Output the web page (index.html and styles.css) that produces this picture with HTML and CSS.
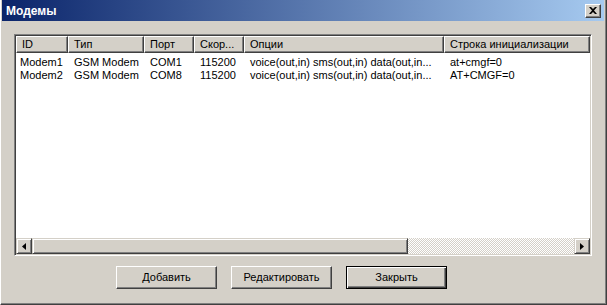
FILE: index.html
```html
<!DOCTYPE html>
<html>
<head>
	<title>Модемы</title>
	<meta charset="utf-8">
	<link rel="stylesheet" href="styles.css">
</head>
<body>
	<div class="window">
		<div class="titlebar">
			<span class="title">Модемы</span>
			<span class="close">
				<svg width="8" height="7" viewBox="0 0 8 7"><path d="M0 0h2l2 2 2-2h2l-3 3.5 3 3.5h-2l-2-2-2 2h-2l3-3.5z" fill="#000"/></svg>
			</span>
		</div>
		<div class="content">
			<div class="listview">
				<div class="header">
					<div class="col c1">ID</div>
					<div class="col c2">Тип</div>
					<div class="col c3">Порт</div>
					<div class="col c4">Скор...</div>
					<div class="col c5">Опции</div>
					<div class="col c6">Строка инициализации</div>
				</div>
				<div class="rows">
					<div class="row">
						<div class="cell c1">Modem1</div>
						<div class="cell c2">GSM Modem</div>
						<div class="cell c3">COM1</div>
						<div class="cell c4">115200</div>
						<div class="cell c5">voice(out,in) sms(out,in) data(out,in...</div>
						<div class="cell c6">at+cmgf=0</div>
					</div>
					<div class="row">
						<div class="cell c1">Modem2</div>
						<div class="cell c2">GSM Modem</div>
						<div class="cell c3">COM8</div>
						<div class="cell c4">115200</div>
						<div class="cell c5">voice(out,in) sms(out,in) data(out,in...</div>
						<div class="cell c6">AT+CMGF=0</div>
					</div>
				</div>
				<div class="hscroll">
					<div class="arrow">
						<svg width="4" height="7" viewBox="0 0 4 7"><path d="M4 0v7L0 3.5z" fill="#000"/></svg>
					</div>
					<div class="thumb"></div>
					<div class="track"></div>
					<div class="arrow">
						<svg width="4" height="7" viewBox="0 0 4 7"><path d="M0 0v7l4-3.5z" fill="#000"/></svg>
					</div>
				</div>
			</div>
			<div class="buttons">
				<div class="btn">Добавить</div>
				<div class="btn">Редактировать</div>
				<div class="btn default">Закрыть</div>
			</div>
		</div>
	</div>
</body>
</html>
```
FILE: styles.css
```css
body {
	margin:0;
	background:#d4d0c8;
	font-family:Tahoma, "Liberation Sans", sans-serif;
	font-size:11px;
	color:#000;
}

.window {
	width:607px;
	height:305px;
	box-sizing:border-box;
	background:#d4d0c8;
	border-left:1px solid #fff;
	border-right:1px solid #404040;
	border-bottom:1px solid #404040;
	box-shadow:inset -1px -1px 0 #808080, inset 1px 0 0 #d4d0c8;
	padding:0 2px 2px 1px;
	display:flex;
	flex-direction:column;
}

.titlebar {
	height:21px;
	background:linear-gradient(to right, #0a246a, #a6caf0);
	display:flex;
	align-items:center;
	justify-content:space-between;
	padding:0 3px 0 4px;
}

.title {
	color:#fff;
	font-weight:bold;
	font-size:12px;
}

.close {
	width:16px;
	height:14px;
	box-sizing:border-box;
	background:#d4d0c8;
	border-top:1px solid #fff;
	border-left:1px solid #fff;
	border-right:1px solid #404040;
	border-bottom:1px solid #404040;
	box-shadow:inset -1px -1px 0 #808080;
	display:flex;
	align-items:center;
	justify-content:center;
}

.content {
	padding:13px 12px 0 12px;
}

.listview {
	width:578px;
	height:222px;
	box-sizing:border-box;
	border-top:1px solid #808080;
	border-left:1px solid #808080;
	border-right:1px solid #fff;
	border-bottom:1px solid #fff;
	box-shadow:inset 1px 1px 0 #404040, inset -1px -1px 0 #d4d0c8;
	background:#fff;
	padding:1px;
	display:flex;
	flex-direction:column;
}

.header {
	display:flex;
	height:17px;
	background:#d4d0c8;
}

.col {
	box-sizing:border-box;
	height:17px;
	line-height:15px;
	padding-left:5px;
	border-top:1px solid #fff;
	border-left:1px solid #fff;
	border-right:1px solid #404040;
	border-bottom:1px solid #404040;
	box-shadow:inset -1px -1px 0 #808080;
	white-space:nowrap;
	overflow:hidden;
}

.c1 { width:52px; }
.c2 { width:76px; }
.c3 { width:50px; }
.c4 { width:50px; }
.c5 { width:200px; }
.c6 { width:146px; }

.rows {
	flex:1;
	padding-top:3px;
}

.row {
	display:flex;
	height:13px;
	line-height:13px;
}

.cell {
	box-sizing:border-box;
	flex-shrink:0;
	padding-left:6px;
	white-space:nowrap;
	overflow:hidden;
}

.cell.c1 {
	padding-left:4px;
}

.hscroll {
	display:flex;
	height:16px;
}

.arrow, .thumb {
	box-sizing:border-box;
	background:#d4d0c8;
	border-top:1px solid #d4d0c8;
	border-left:1px solid #d4d0c8;
	border-right:1px solid #404040;
	border-bottom:1px solid #404040;
	box-shadow:inset 1px 1px 0 #fff, inset -1px -1px 0 #808080;
}

.arrow {
	width:16px;
	display:flex;
	align-items:center;
	justify-content:center;
}

.thumb {
	width:376px;
}

.track {
	flex:1;
	background:repeating-conic-gradient(#d4d0c8 0 25%, #fff 0 50%) 0 0/2px 2px;
}

.buttons {
	display:flex;
	gap:14px;
	padding:10px 0 0 102px;
}

.btn {
	width:101px;
	height:23px;
	box-sizing:border-box;
	text-align:center;
	line-height:20px;
	border-top:1px solid #fff;
	border-left:1px solid #fff;
	border-right:1px solid #404040;
	border-bottom:1px solid #404040;
	box-shadow:inset -1px -1px 0 #808080;
}

.btn.default {
	border:1px solid #000;
	box-shadow:inset 1px 1px 0 #fff, inset -1px -1px 0 #404040, inset -2px -2px 0 #808080;
}
```
